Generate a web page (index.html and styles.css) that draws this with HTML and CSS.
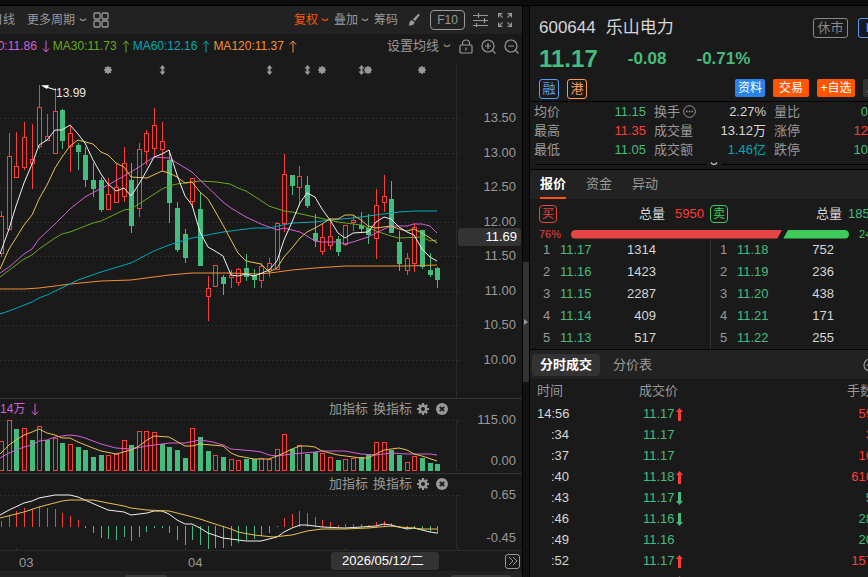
FILE: index.html
```html
<!DOCTYPE html>
<html lang="zh-CN">
<head>
    <meta charset="UTF-8">
    <meta name="viewport" content="width=device-width, initial-scale=1.0">
    <title>乐山电力 600644</title>
    <link rel="stylesheet" href="styles.css">
</head>
<body>
    <svg class="defs" width="0" height="0">
        <symbol id="chevron" viewBox="0 0 8 6"><path d="M1 1.5C2 4 6 4 7 1.5" fill="none" stroke="currentColor" stroke-width="1.2"/></symbol>
        <symbol id="arrow-up" viewBox="0 0 8 13"><path d="M4 12.5V1M1 4.5L4 1l3 3.5" fill="none" stroke="currentColor"/></symbol>
        <symbol id="arrow-down" viewBox="0 0 8 13"><path d="M4 .5V12M1 8.5L4 12l3-3.5" fill="none" stroke="currentColor"/></symbol>
        <symbol id="tick-up" viewBox="0 0 7 13"><path d="M3.5 0L7 4H5v9H2V4H0z" fill="currentColor"/></symbol>
        <symbol id="tick-down" viewBox="0 0 7 13"><path d="M3.5 13L7 9H5V0H2v9H0z" fill="currentColor"/></symbol>
        <symbol id="gear" viewBox="0 0 12 12"><circle cx="6" cy="6" r="3.2" fill="none" stroke="currentColor" stroke-width="2.4"/><path d="M6 0v2M6 10v2M0 6h2M10 6h2M1.8 1.8l1.4 1.4M8.8 8.8l1.4 1.4M1.8 10.2l1.4-1.4M8.8 3.2l1.4-1.4" stroke="currentColor" stroke-width="2.2"/></symbol>
        <symbol id="close" viewBox="0 0 12 12"><circle cx="6" cy="6" r="6" fill="currentColor"/><path d="M3.8 3.8l4.4 4.4M8.2 3.8L3.8 8.2" stroke="#1a1a1a" stroke-width="1.8"/></symbol>
    </svg>

    <div class="titlebar"></div>
    <main class="layout">
        <section class="chart-panel">
            <div class="toolbar">
                <button class="tool period">日线</button>
                <label class="dropdown more"><select aria-label="周期"><option>更多周期</option></select><svg width="8" height="6"><use href="#chevron"/></svg></label>
                <button class="tool" aria-label="多图">
                    <svg width="16" height="16" fill="none" stroke="currentColor" stroke-width="1.3"><rect x="1" y="1" width="6" height="6" rx="1"/><rect x="9" y="1" width="6" height="6" rx="1"/><rect x="1" y="9" width="6" height="6" rx="1"/><rect x="9" y="9" width="6" height="6" rx="1"/></svg>
                </button>
                <div class="toolbar-right">
                    <label class="dropdown orange"><select aria-label="复权"><option>复权</option></select><svg width="8" height="6"><use href="#chevron"/></svg></label>
                    <label class="dropdown"><select aria-label="叠加"><option>叠加</option></select><svg width="8" height="6"><use href="#chevron"/></svg></label>
                    <button class="tool">筹码</button>
                    <button class="tool brush" aria-label="画线">
                        <svg width="12" height="14" fill="currentColor"><path d="M11.5 1.2L10.3.8 5 6.3l2 2 4.6-6zM4.2 7.2C2.6 7 1.7 8 1.5 9.5 1.4 11 1 11.6.5 12.3c2.2.7 6 .3 6-3z"/></svg>
                    </button>
                    <button class="f10">F10</button>
                    <button class="tool" aria-label="参数">
                        <svg width="15" height="14" fill="none" stroke="currentColor"><path d="M0 2.5h15M0 7.5h15M0 12.5h15M5.5 0v5M11.5 5v5M3.5 10v4" stroke-width="1.2"/></svg>
                    </button>
                    <button class="tool" aria-label="全屏">
                        <svg width="14" height="14" fill="none" stroke="currentColor" stroke-width="1.2"><path d="M.6 4.5V.6h3.9M.6.6l4 4M9.5.6h3.9v3.9M13.4.6l-4 4M.6 9.5v3.9h3.9M.6 13.4l4-4M9.5 13.4h3.9V9.5M13.4 13.4l-4-4"/></svg>
                    </button>
                </div>
            </div>

            <div class="legend">
                <span class="ma magenta">MA20:11.86</span><svg class="magenta" width="8" height="13"><use href="#arrow-down"/></svg>
                <span class="ma lime">MA30:11.73</span><svg class="lime" width="8" height="13"><use href="#arrow-up"/></svg>
                <span class="ma cyan">MA60:12.16</span><svg class="cyan" width="8" height="13"><use href="#arrow-up"/></svg>
                <span class="ma amber">MA120:11.37</span><svg class="amber" width="8" height="13"><use href="#arrow-up"/></svg>
                <div class="legend-right">
                    <label class="dropdown large"><select aria-label="均线"><option>设置均线</option></select><svg width="8" height="6"><use href="#chevron"/></svg></label>
                    <button class="tool" aria-label="锁定">
                        <svg width="14" height="15" fill="none" stroke="currentColor" stroke-width="1.2"><rect x="1" y="6" width="12" height="8" rx="1"/><path d="M3.5 6V4a3.5 3 0 0 1 7 0v2M7 8.5v3"/></svg>
                    </button>
                    <button class="tool" aria-label="放大">
                        <svg width="15" height="15" fill="none" stroke="currentColor" stroke-width="1.2"><circle cx="7" cy="7" r="6"/><path d="M11.5 11.5l3 3M4 7h6M7 4v6"/></svg>
                    </button>
                    <button class="tool" aria-label="缩小">
                        <svg width="15" height="15" fill="none" stroke="currentColor" stroke-width="1.2"><circle cx="7" cy="7" r="6"/><path d="M11.5 11.5l3 3M4 7h6"/></svg>
                    </button>
                </div>
            </div>

            <div class="pane pane-main">
                <svg class="plot" id="kline"></svg>
                <div class="axis axis-main">
                    <span>13.50</span><span>13.00</span><span>12.50</span><span>12.00</span>
                    <span>11.50</span><span>11.00</span><span>10.50</span><span>10.00</span>
                    <b class="price-tag">11.69</b>
                </div>
            </div>

            <div class="pane pane-volume">
                <div class="pane-left">
                    <div class="pane-head">
                        <span class="ma magenta">14万</span><svg class="magenta" width="8" height="13"><use href="#arrow-down"/></svg>
                        <div class="pane-tools">
                            <button class="tool large">加指标</button>
                            <button class="tool large">换指标</button>
                            <button class="tool icon" aria-label="设置"><svg width="12" height="12"><use href="#gear"/></svg></button>
                            <button class="tool icon" aria-label="关闭"><svg width="12" height="12"><use href="#close"/></svg></button>
                        </div>
                    </div>
                    <svg class="plot" id="volume"></svg>
                </div>
                <div class="axis axis-sub"><span>115.00</span><span>0.00</span></div>
            </div>

            <div class="pane pane-macd">
                <div class="pane-left">
                    <div class="pane-head">
                        <div class="pane-tools">
                            <button class="tool large">加指标</button>
                            <button class="tool large">换指标</button>
                            <button class="tool icon" aria-label="设置"><svg width="12" height="12"><use href="#gear"/></svg></button>
                            <button class="tool icon" aria-label="关闭"><svg width="12" height="12"><use href="#close"/></svg></button>
                        </div>
                    </div>
                    <svg class="plot" id="macd"></svg>
                </div>
                <div class="axis axis-sub"><span>0.65</span><span>-0.45</span></div>
            </div>

            <div class="timeline">
                <svg class="plot months" id="months"></svg>
                <span class="date-tag">2026/05/12/二</span>
                <button class="next" aria-label="展开"><svg width="10" height="10" fill="none" stroke="currentColor"><path d="M1 1l4 4-4 4M5 1l4 4-4 4"/></svg></button>
            </div>
            <div class="scrollbar"><i class="thumb"></i><i class="thumb wide"></i></div>
        </section>

        <div class="gutter"><button class="handle" aria-label="收起"><svg width="4" height="6"><path d="M0 0l4 3-4 3z" fill="currentColor"/></svg></button></div>

        <aside class="quote-panel">
            <div class="quote">
                <header class="head">
                    <div class="name-row">
                        <h1>600644</h1>
                        <h1>乐山电力</h1>
                        <span class="status">休市</span>
                        <span class="status level">L1</span>
                    </div>
                    <div class="price-row green"><b class="price">11.17</b><b class="change">-0.08</b><b>-0.71%</b></div>
                    <div class="action-row">
                        <span class="mark blue">融</span>
                        <span class="mark peach">港</span>
                        <button class="action info">资料</button>
                        <button class="action trade">交易</button>
                        <button class="action add">+自选</button>
                        <button class="action alert" aria-label="提醒"><svg width="12" height="12"><path d="M6 1l5 9H1z" fill="currentColor"/></svg></button>
                    </div>
                </header>

                <dl class="facts">
                    <div><dt>均价</dt><dd class="green">11.15</dd></div>
                    <div><dt>换手<svg width="13" height="13" fill="none" stroke="currentColor"><circle cx="6.5" cy="6.5" r="5.8"/><path d="M3 6.5h1.5M5.8 6.5h1.5M8.5 6.5h1.5" stroke-width="1.5"/></svg></dt><dd>2.27%</dd></div>
                    <div><dt>量比</dt><dd class="green">0.66</dd></div>
                    <div><dt>最高</dt><dd class="red">11.35</dd></div>
                    <div><dt>成交量</dt><dd>13.12万</dd></div>
                    <div><dt>涨停</dt><dd class="red">12.38</dd></div>
                    <div><dt>最低</dt><dd class="green">11.05</dd></div>
                    <div><dt>成交额</dt><dd class="cyan">1.46亿</dd></div>
                    <div><dt>跌停</dt><dd class="green">10.13</dd></div>
                </dl>
                <div class="expand"><svg width="8" height="6"><use href="#chevron"/></svg></div>

                <nav class="tabs">
                    <button class="tab active">报价</button>
                    <button class="tab">资金</button>
                    <button class="tab">异动</button>
                </nav>

                <div class="totals">
                    <div class="side buy"><span class="mark crimson">买</span><span class="label">总量</span><span class="red">5950</span></div>
                    <div class="side sell"><span class="mark leaf">卖</span><span class="label">总量</span><span class="green">1856</span></div>
                </div>
                <div class="ratio">
                    <span class="crimson">76%</span>
                    <div class="bar"><i class="bar-buy" style="width: 76%"></i><i class="bar-sell"></i></div>
                    <span class="leaf">24%</span>
                </div>

                <div class="book">
                    <table class="orders">
                        <tr><th>1</th><td class="green">11.17</td><td>1314</td></tr>
                        <tr><th>2</th><td class="green">11.16</td><td>1423</td></tr>
                        <tr><th>3</th><td class="green">11.15</td><td>2287</td></tr>
                        <tr><th>4</th><td class="green">11.14</td><td>409</td></tr>
                        <tr><th>5</th><td class="green">11.13</td><td>517</td></tr>
                    </table>
                    <table class="orders asks">
                        <tr><th>1</th><td class="green">11.18</td><td>752</td></tr>
                        <tr><th>2</th><td class="green">11.19</td><td>236</td></tr>
                        <tr><th>3</th><td class="green">11.20</td><td>438</td></tr>
                        <tr><th>4</th><td class="green">11.21</td><td>171</td></tr>
                        <tr><th>5</th><td class="green">11.22</td><td>255</td></tr>
                    </table>
                </div>

                <nav class="deal-tabs">
                    <button class="deal-tab active">分时成交</button>
                    <button class="deal-tab">分价表</button>
                    <button class="tool deal-more" aria-label="更多"><svg width="14" height="14" fill="none" stroke="currentColor" stroke-width="1.2"><circle cx="7" cy="7" r="6"/><path d="M3.5 7h7"/></svg></button>
                </nav>
                <table class="deals">
                    <thead><tr><th>时间</th><th>成交价</th><th>手数</th></tr></thead>
                    <tbody>
                        <tr><td>14:56</td><td>11.17<svg class="red" width="7" height="13"><use href="#tick-up"/></svg></td><td class="red">59</td></tr>
                        <tr><td>:34</td><td>11.17</td><td class="red">3</td></tr>
                        <tr><td>:37</td><td>11.17</td><td class="red">16</td></tr>
                        <tr><td>:40</td><td>11.18<svg class="red" width="7" height="13"><use href="#tick-up"/></svg></td><td class="red">610</td></tr>
                        <tr><td>:43</td><td>11.17<svg class="green" width="7" height="13"><use href="#tick-down"/></svg></td><td class="green">5</td></tr>
                        <tr><td>:46</td><td>11.16<svg class="green" width="7" height="13"><use href="#tick-down"/></svg></td><td class="green">28</td></tr>
                        <tr><td>:49</td><td>11.16</td><td class="green">20</td></tr>
                        <tr><td>:52</td><td>11.17<svg class="red" width="7" height="13"><use href="#tick-up"/></svg></td><td class="red">157</td></tr>
                        <tr><td>:55</td><td>11.18<svg class="red" width="7" height="13"><use href="#tick-up"/></svg></td><td class="red">72</td></tr>
                    </tbody>
                </table>
            </div>
        </aside>
    </main>
    <script src="chart.js"></script>
</body>
</html>
```

FILE: styles.css
```css
* {
    box-sizing: border-box;
}

body {
    margin: 0;
    height: 100vh;
    display: flex;
    flex-direction: column;
    overflow: hidden;
    background-color: #1a1a1a;
    color: #d6d6d6;
    font-family: "Liberation Sans", "Noto Sans CJK SC", sans-serif;
    font-size: 13px;
    line-height: 18px;
}

button,
select {
    margin: 0;
    padding: 0;
    border: none;
    background: none;
    color: inherit;
    font: inherit;
    cursor: pointer;
    appearance: none;
}

svg {
    display: block;
    flex: none;
}

.defs {
    position: absolute;
}

.red { color: #ff3d38; }
.green { color: #45bc7d; }
.cyan { color: #00a9b8; }
.magenta { color: #d45fd6; }
.lime { color: #69a81e; }
.amber { color: #f5902f; }
.crimson { color: #e54545; }
.leaf { color: #3ecb5b; }
.blue { color: #5d9cf5; }
.peach { color: #f79a55; }

.titlebar {
    flex: none;
    height: 6px;
    background-color: #0d0d0d;
    border-bottom: 1px solid #000;
}

.layout {
    flex: 1;
    min-height: 0;
    display: flex;
}

/* chart side */
.chart-panel {
    flex: 1;
    min-width: 0;
    display: flex;
    flex-direction: column;
    overflow: hidden;
    color: #999;
}

.toolbar {
    flex: none;
    height: 28px;
    display: flex;
    align-items: center;
    padding-right: 10px;
    background-color: #222;
    font-size: 12px;
    white-space: nowrap;
}

.tool {
    flex: none;
}

.large {
    font-size: 13px;
}

.period {
    margin-left: -9px;
}

.more {
    margin: 0 6px 0 12px;
}

.toolbar-right {
    margin-left: auto;
    display: flex;
    align-items: center;
    gap: 5px;
}

.toolbar-right .tool + .tool {
    margin-left: 5px;
}

.dropdown {
    display: flex;
    align-items: center;
    gap: 3px;
}

.toolbar-right .dropdown {
    gap: 2px;
}

.orange {
    color: #ff5500;
}

.toolbar-right .brush {
    margin-right: 5px;
}

.f10 {
    width: 35px;
    height: 20px;
    margin-right: 3px;
    border: 1px solid #999;
    border-radius: 4px;
}

.legend {
    flex: none;
    height: 24px;
    display: flex;
    align-items: center;
    padding-right: 3px;
    white-space: nowrap;
}

.legend > svg {
    margin: 0 3px 0 5px;
}

.ma {
    font-size: 12px;
}

.legend > .ma:first-child {
    margin-left: -27px;
}

.legend-right {
    margin-left: auto;
    display: flex;
    align-items: center;
    gap: 8px;
}

.pane {
    flex: none;
    display: flex;
    border-bottom: 1px solid #333;
}

.pane-main {
    flex: 1;
    min-height: 0;
}

.plot {
    flex: 1;
    min-width: 0;
    overflow: visible;
}

.pane-left {
    flex: 1;
    min-width: 0;
    display: flex;
    flex-direction: column;
}

.pane-volume {
    height: 75px;
}

.pane-macd {
    height: 77px;
    border-color: #2a2a2a;
}

.pane-head {
    height: 20px;
    flex: none;
    display: flex;
    align-items: center;
    gap: 6px;
}

.pane-tools {
    margin-left: auto;
    margin-right: 8px;
    display: flex;
    align-items: center;
    gap: 5px;
}

.icon + .icon {
    margin-left: 2px;
}

.axis {
    position: relative;
    flex: none;
    width: 66px;
    display: flex;
    flex-direction: column;
    justify-content: space-between;
    padding-right: 6px;
    text-align: right;
}

.axis-main {
    margin-top: 6px;
    border-left: 1px solid #2a2a2a;
    padding-top: 45px;
    padding-bottom: 29px;
}

.axis-sub {
    padding-top: 12px;
    padding-bottom: 3px;
}

.price-tag {
    position: absolute;
    top: 164px;
    left: 1px;
    right: 1px;
    padding-right: 4px;
    border-radius: 3px;
    background-color: #333;
    color: #fff;
    font-weight: normal;
}

.timeline {
    position: relative;
    flex: none;
    height: 20px;
    display: flex;
    align-items: center;
    padding-right: 2px;
}

.months {
    height: 20px;
}

.date-tag {
    position: absolute;
    left: 331px;
    width: 108px;
    padding-left: 11px;
    border-radius: 3px;
    background-color: #333;
    color: #fff;
}

.next {
    width: 15px;
    height: 15px;
    display: flex;
    align-items: center;
    justify-content: center;
    border: 1px solid #999;
    border-radius: 3px;
}

.scrollbar {
    flex: none;
    height: 6px;
    display: flex;
    justify-content: space-between;
    padding: 4px 11px 0 125px;
    background-color: #222;
}

.thumb {
    width: 42px;
    border-radius: 2px 2px 0 0;
    background-color: #3a3a3a;
}

.wide {
    width: 60px;
}

/* splitter */
.gutter {
    flex: none;
    width: 8px;
    padding-top: 256px;
    border: 1px solid #000;
    border-width: 0 1px;
    background-color: #111;
}

.handle {
    width: 100%;
    height: 120px;
    display: flex;
    align-items: center;
    justify-content: center;
    background-color: #333;
    color: #999;
}

/* quote side */
.quote-panel {
    flex: none;
    width: 338px;
    overflow: hidden;
}

.quote {
    width: 368px;
}

.head {
    height: 96px;
    padding: 12px 10px 0 9px;
    border-bottom: 1px solid #000;
}

.name-row {
    display: flex;
    align-items: center;
    gap: 10px;
}

h1 {
    margin: 0;
    font-size: 17px;
    font-weight: normal;
    line-height: 20px;
}

.status {
    width: 35px;
    height: 20px;
    margin-left: auto;
    border: 1px solid #888;
    border-radius: 3px;
    color: #888;
    text-align: center;
}

.level {
    width: 30px;
    margin-left: 0;
    border-color: #5d9cf5;
    color: #5d9cf5;
}

.price-row {
    display: flex;
    align-items: center;
    gap: 30px;
    height: 41px;
    font-size: 17px;
}

.price {
    font-size: 24px;
}

.action-row {
    display: flex;
    align-items: flex-start;
    gap: 8px;
}

.mark {
    width: 20px;
    height: 20px;
    border: 1px solid currentColor;
    border-radius: 3px;
    text-align: center;
}

.action {
    height: 18px;
    border-radius: 2px;
    color: #fff;
    font-size: 12px;
}

.info {
    width: 30px;
    margin-left: auto;
    background-color: #2b82e8;
}

.trade {
    width: 36px;
    background-color: #ff5500;
}

.add {
    width: 38px;
    background-color: #ff5500;
}

.alert {
    width: 25px;
    padding-left: 3px;
    background-color: #333;
    color: #999;
}

.facts {
    margin: 0;
    padding: 0 12px 0 4px;
    display: grid;
    grid-template-columns: repeat(3, 112px);
    grid-auto-rows: 19px;
    column-gap: 8px;
}

.facts div {
    display: flex;
    align-items: center;
    justify-content: space-between;
}

.facts dt {
    display: flex;
    align-items: center;
    gap: 3px;
    color: #999;
}

.facts dd {
    margin: 0;
}

.expand {
    height: 11px;
    display: flex;
    align-items: center;
    gap: 4px;
    padding: 0 5px;
    border-bottom: 1px solid #000;
}

.expand::before,
.expand::after {
    content: "";
    flex: 1;
    border-top: 1px solid #000;
}

.tabs {
    height: 29px;
    display: flex;
    gap: 20px;
    padding-left: 10px;
    background-color: #222;
    color: #999;
}

.tab {
    border-bottom: 2px solid transparent;
}

.active {
    color: #fff;
    font-weight: bold;
}

.tab.active {
    border-color: #ff5500;
}

.totals {
    display: flex;
    padding: 6px 0 0 9px;
}

.side {
    display: flex;
    align-items: center;
    width: 171px;
}

.buy {
    padding-right: 6px;
}

.sell {
    width: 167px;
}

.totals .mark {
    width: 18px;
    height: 18px;
    border-radius: 4px;
    font-size: 12px;
    line-height: 16px;
}

.label {
    margin-left: auto;
    margin-right: 10px;
}

.sell .label {
    margin-right: 6px;
}

.ratio {
    display: flex;
    align-items: center;
    gap: 10px;
    height: 16px;
    padding: 6px 0 0 9px;
    font-size: 11px;
}

.bar {
    width: 278px;
    height: 9px;
    display: flex;
    border-radius: 5px;
    overflow: hidden;
}

.bar-buy {
    background-color: #e54545;
    clip-path: polygon(0 0, 100% 0, calc(100% - 5px) 100%, 0 100%);
}

.bar-sell {
    flex: 1;
    background-color: #3ecb5b;
    clip-path: polygon(6px 0, 100% 0, 100% 100%, 1px 100%);
}

.book {
    display: flex;
    padding-left: 4px;
    border-bottom: 1px solid #000;
}

table {
    border-collapse: collapse;
}

th,
td {
    padding: 0;
    font-weight: normal;
}

.orders {
    width: 177px;
    border-right: 1px solid #333;
    table-layout: fixed;
}

.asks {
    border: none;
}

.orders tr {
    height: 22px;
}

.orders th {
    width: 26px;
    padding-left: 9px;
    color: #999;
    text-align: left;
}

.orders td {
    text-align: left;
}

.orders td:last-child {
    padding-right: 54px;
    text-align: right;
}

.orders td:nth-child(2) {
    width: 38px;
}

.deal-tabs {
    height: 29px;
    display: flex;
    align-items: center;
    gap: 5px;
    padding: 0 21px 0 2px;
    background-color: #222;
    color: #999;
}

.deal-tab {
    height: 22px;
    padding: 0 8px;
    border-radius: 4px;
}

.deal-tab.active {
    background-color: #333;
}

.deal-more {
    margin-left: auto;
}

.deals {
    width: 343px;
    table-layout: fixed;
}

.deals tr {
    height: 21px;
}

.deals thead tr {
    height: 24px;
    color: #999;
}

.deals th:nth-child(1),
.deals td:nth-child(1) {
    width: 39px;
    padding-left: 7px;
    text-align: right;
}

.deals th:nth-child(1) {
    text-align: left;
}

.deals th:nth-child(2) {
    padding-left: 70px;
    text-align: left;
}

.deals td:nth-child(2) {
    padding-left: 74px;
    color: #45bc7d;
}

.deals td svg {
    display: inline-block;
    vertical-align: text-bottom;
    margin-left: 1px;
}

.deals th:nth-child(3),
.deals td:nth-child(3) {
    width: 60px;
    text-align: right;
}
```

FILE: chart.js
```js
const RED = '#ff3d38';
const GREEN = '#45bc7d';
const GRID = '#3a3a3a';

// [color, high, body top, body bottom, low]
const candles = [
    ['r',211,216,254,257],['r',133,156,230,230],['r',132,166,178,178],['r',122,137,168,170],['r',124,159,164,189],
    ['r',85,107,147,149],['r',114,136,141,141],['r',88,111,154,154],['g',109,110,141,149],['r',126,133,147,172],
    ['g',143,145,152,170],['g',147,155,180,187],['g',163,180,189,197],['g',177,180,210,212],['r',178,194,210,210],
    ['r',163,187,203,203],['r',147,163,197,202],['g',163,180,226,233],['r',143,149,209,217],['r',130,133,152,165],
    ['r',108,125,149,157],['r',122,141,150,171],['g',150,160,203,223],['g',202,208,250,252],['g',229,234,258,263],
    ['r',178,178,202,208],['g',192,209,266,266],['r',276,288,297,321],['r',265,265,287,287],['g',275,277,284,295],
    ['r',270,275,278,288],['r',268,269,283,286],['g',254,268,277,281],['g',269,275,280,288],['r',263,266,281,288],
    ['r',258,263,270,277],['r',222,223,270,270],['r',154,174,224,232],['g',175,175,186,195],['r',166,176,188,206],
    ['g',176,185,206,208],['g',214,233,241,247],['r',224,237,252,255],['r',218,236,246,250],['g',236,239,252,256],
    ['r',225,225,245,246],['r',215,220,223,231],['g',212,225,229,232],['g',214,228,235,244],['r',189,205,239,259],
    ['r',175,196,203,212],['g',181,199,233,233],['g',231,242,264,271],['r',253,258,271,275],['r',223,227,264,272],
    ['g',230,230,267,269],['g',253,270,275,277],['g',267,268,280,288]
];

// bar tops, negative = green bar
const volumes = [
    441,420,-429,428,-440,426,-440,438,-443,444,-447,-450,-457,-455,455,454,440,-445,431,431,
    432,-444,-447,-450,-458,428,-437,-451,455,-457,459,460,-459,-459,458,459,449,434,-449,445,
    -454,-452,453,457,-460,459,458,-457,-454,442,442,-450,-455,462,456,-458,-463,-464
];

const histogram = [
    521,515,511,508,509,507,508,509,513,516,520,528,533,538,539,540,537,541,537,532,
    528,528,533,540,545,540,545,549,548,548,546,543,540,539,536,533,527,518,514,511,
    513,517,520,522,525,524,524,524,525,522,521,523,527,529,529,530,532,534
];

const maLines = {
    '#f29030': '0,289 24,289 39,288 55,286 70,284 101,281 131,280 169,275 192,273 230,273 257,274 270,273 292,270 315,268 345,266 407,266 437,265',
    '#00a9b8': '0,314 9,311 32,302 39,298 47,295 78,280 101,272 131,263 154,251 169,245 192,238 223,232 254,228 269,228 292,223 315,222 330,220 353,218 376,215 399,212 414,211 437,211',
    '#69a81e': '0,277 24,259 32,255 39,249 55,238 62,234 70,232 93,223 101,221 124,210 131,209 145,200 162,189 169,186 177,184 200,181 217,182 230,184 238,188 246,191 260,200 269,206 284,211 292,212 315,217 338,222 361,225 376,231 391,236 399,238 422,237 430,241 437,240',
    '#d45fd6': '0,273 9,267 16,261 24,254 32,249 39,239 55,224 70,209 85,197 98,190 108,185 124,176 139,167 154,157 169,158 177,163 192,172 200,180 223,202 231,208 246,217 261,224 269,227 277,230 284,228 292,230 300,232 307,236 315,241 322,242 338,242 345,244 353,242 368,237 376,233 384,229 391,226 407,226 414,224 422,224 430,226 437,233',
    '#e8c050': '0,269 9,249 16,238 24,225 32,215 39,199 47,185 55,168 62,157 70,146 78,140 93,144 101,152 108,155 116,163 124,167 131,177 147,178 162,171 169,173 177,177 185,183 192,182 200,192 208,199 215,211 223,225 231,240 238,253 246,261 261,264 269,272 277,268 284,257 292,248 300,238 307,232 315,228 322,224 330,219 338,219 345,215 353,215 361,220 368,226 376,228 391,226 399,229 407,231 414,229 422,233 430,238 437,243',
    '#f0f0f0': '0,254 9,229 16,206 24,183 32,164 39,145 47,140 55,130 62,130 70,125 78,134 85,143 93,160 101,174 108,184 116,191 124,188 131,196 139,184 147,170 154,157 162,154 169,150 177,175 185,196 192,205 200,232 208,247 215,251 223,256 231,275 238,276 246,274 254,276 262,273 269,270 277,261 284,240 292,222 300,203 307,193 315,197 322,209 330,220 338,233 345,238 353,233 368,232 376,222 384,217 391,219 399,227 407,232 414,235 422,249 430,257 437,261'
};

const volumeLines = {
    '#d45fd6': '0,458 9,453 24,447 32,445 39,441 47,440 55,437 70,435 78,436 85,438 101,444 116,448 131,449 147,446 169,443 185,443 200,440 213,442 223,445 231,449 254,451 261,452 269,455 277,456 292,454 315,452 322,451 345,451 361,454 376,455 391,453 407,454 430,454 437,455',
    '#e8c050': '0,454 9,445 16,440 24,435 32,432 39,429 47,433 55,435 62,438 70,438 78,442 93,448 101,451 116,454 131,450 139,446 147,440 154,436 169,437 185,446 192,446 200,444 223,446 231,453 238,456 254,459 269,459 277,456 284,453 292,449 300,446 307,446 315,447 322,451 338,455 361,458 368,458 376,454 384,450 391,449 399,448 407,450 414,454 422,456 437,461'
};

const macdLines = {
    '#f0f0f0': '0,515 9,510 24,503 32,501 39,498 55,495 70,495 78,497 85,500 101,507 108,510 124,512 131,515 147,513 154,511 162,511 169,514 177,520 185,524 192,524 200,528 208,533 223,538 246,541 261,541 269,539 277,537 284,532 292,528 300,525 307,525 322,527 345,528 361,527 376,526 384,524 391,525 399,527 407,529 414,528 430,532 437,533',
    '#e8c050': '0,518 24,512 39,507 62,501 70,500 93,500 108,503 124,506 131,508 147,510 169,511 185,515 200,519 215,524 231,529 238,532 254,535 273,537 292,535 307,531 322,529 345,529 368,528 391,526 399,527 414,528 422,529 437,529'
};

function barX(i) {
    return Math.floor(1.6 + 7.65 * i) + 0.5;
}

function line(x1, y1, x2, y2, color, extra) {
    return `<line x1="${x1}" y1="${y1}" x2="${x2}" y2="${y2}" stroke="${color}" ${extra || ''}/>`;
}

function box(x, top, bottom, color, filled) {
    if (filled) {
        return `<rect x="${x - 2.5}" y="${top}" width="5" height="${bottom - top}" fill="${color}"/>`;
    }
    return `<rect x="${x - 2}" y="${top + 0.5}" width="4" height="${Math.max(bottom - top - 1, 1)}" fill="none" stroke="${color}"/>`;
}

function gridLine(y) {
    return line(0, y, 456, y, GRID, 'stroke-dasharray="1 3"') + line(456, y, 460, y, '#2a2a2a');
}

function curves(set) {
    return Object.keys(set).map(color => `<polyline points="${set[color]}" fill="none" stroke="${color}"/>`).join('');
}

// every pane shares one vertical scale, originY is where the pane starts on it
function draw(id, originY, content) {
    document.getElementById(id).innerHTML = `<g transform="translate(0 ${-originY})">${content}</g>`;
}

function star(x) {
    let rays = '';
    for (let a = 0; a < 180; a += 45) {
        rays += `<line x1="${x - 4}" y1="70" x2="${x + 4}" y2="70" stroke="#999" stroke-width="1.5" transform="rotate(${a} ${x} 70)"/>`;
    }
    return `<circle cx="${x}" cy="70" r="3" fill="#999"/>` + rays;
}

function upDown(x) {
    return `<path d="M${x} 65l3 3.5h-2v3h2l-3 3.5l-3-3.5h2v-3h-2z" fill="#999"/>`;
}

let kline = [118.5, 153.5, 187.5, 222.5, 256.5, 291.5, 325.5, 360.5].map(gridLine).join('');
candles.forEach(([type, high, top, bottom, low], i) => {
    const x = barX(i);
    const color = type === 'r' ? RED : GREEN;
    kline += line(x, high, x, top, color) + line(x, bottom, x, low, color) + box(x, top, bottom, color, type === 'g');
});
kline += curves(maLines);
kline += [108, 322, 368, 422].map(star).join('') + [162.5, 269.5, 307.5, 361.5].map(upDown).join('');
kline += '<path d="M56 90L43 86" stroke="#fff"/><path d="M41 85.5l8-.5l-2 4z" fill="#fff"/>';
kline += '<text x="56" y="97" fill="#e6e6e6" font-size="12">13.99</text>';
draw('kline', 58, kline);

let volume = gridLine(420.5);
volumes.forEach((v, i) => {
    volume += box(barX(i), Math.abs(v), 471, v < 0 ? GREEN : RED, v < 0);
});
volume += curves(volumeLines) + line(456.5, 420, 456.5, 471, '#2a2a2a') + line(456, 470.5, 460, 470.5, '#2a2a2a');
draw('volume', 419, volume);

let macd = gridLine(495.5);
histogram.forEach((h, i) => {
    const x = barX(i);
    macd += h < 526 ? line(x, h, x, 527, RED) : line(x, 526, x, h, GREEN);
});
macd += curves(macdLines) + line(456.5, 495, 456.5, 549, '#2a2a2a') + line(456, 548.5, 460, 548.5, '#2a2a2a');
draw('macd', 494, macd);

let months = [16.5, 185.5, 345.5].map(x => line(x, 548, x, 551, '#333')).join('');
months += '<text x="19" y="567" fill="#999">03</text><text x="188" y="567" fill="#999">04</text>';
draw('months', 551, months);
```
